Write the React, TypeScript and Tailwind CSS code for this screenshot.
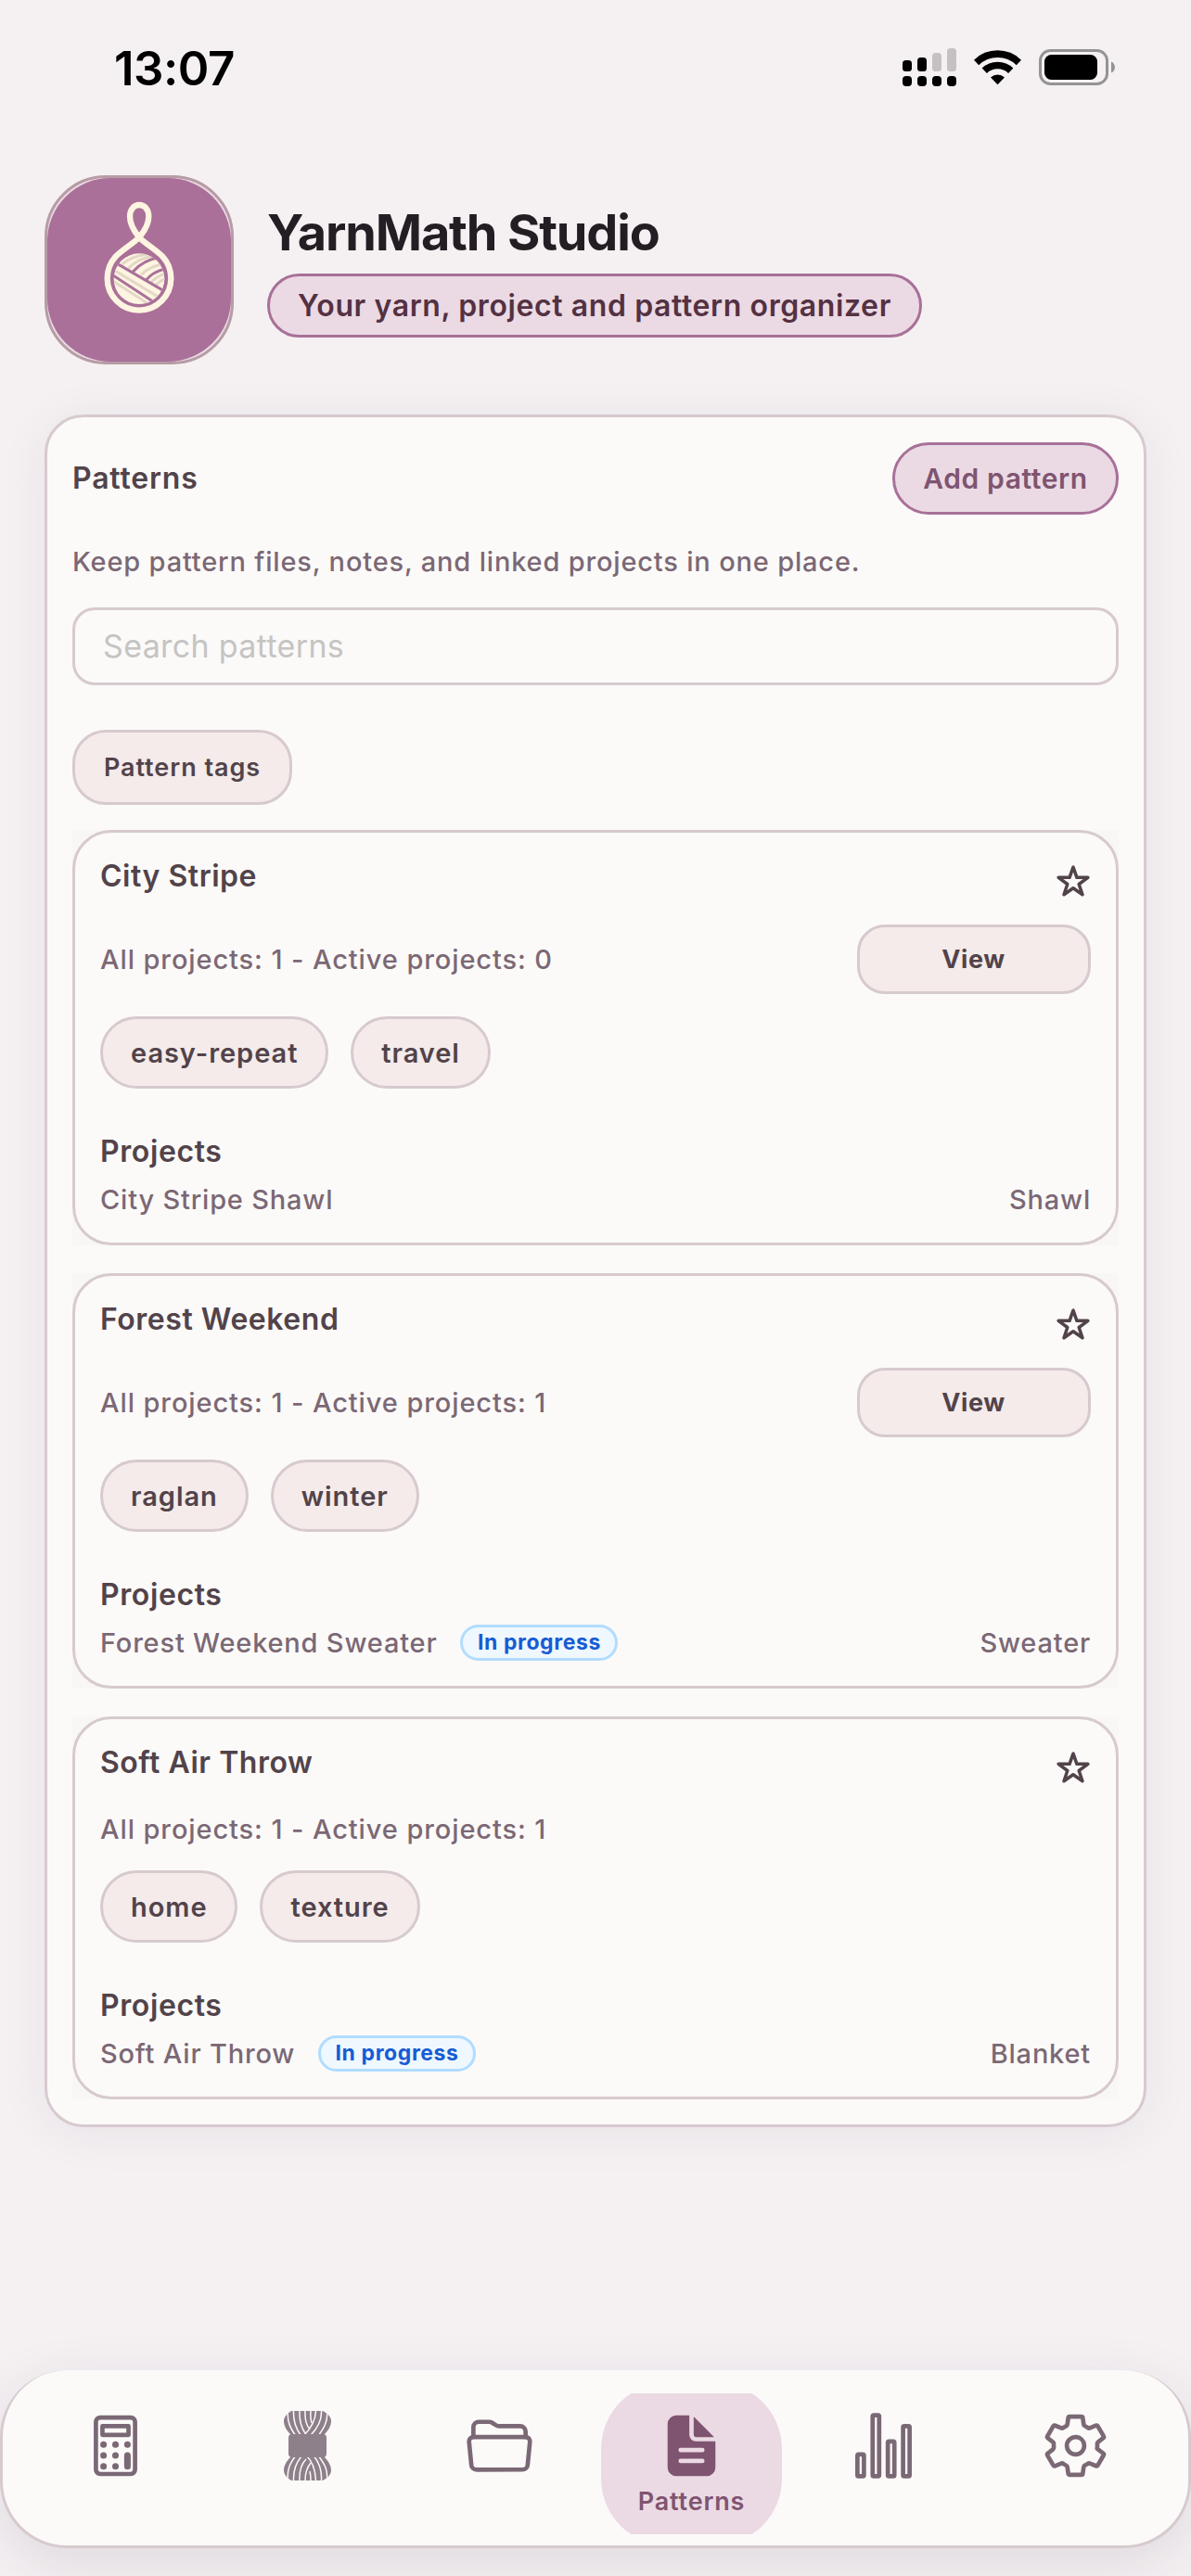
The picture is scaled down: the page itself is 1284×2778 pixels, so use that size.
import React from 'react';
import {
  IoCalculatorOutline,
  IoDocumentText,
  IoFolderOpenOutline,
  IoSettingsOutline,
  IoStatsChartOutline,
} from 'react-icons/io5';

interface Project {
  name: string;
  type: string;
  inProgress: boolean;
}

interface Pattern {
  id: number;
  name: string;
  total: number;
  active: number;
  hasFile: boolean;
  tags: string[];
  projects: Project[];
}

const patterns: Pattern[] = [
  {
    id: 1,
    name: 'City Stripe',
    total: 1,
    active: 0,
    hasFile: true,
    tags: ['easy-repeat', 'travel'],
    projects: [{ name: 'City Stripe Shawl', type: 'Shawl', inProgress: false }],
  },
  {
    id: 2,
    name: 'Forest Weekend',
    total: 1,
    active: 1,
    hasFile: true,
    tags: ['raglan', 'winter'],
    projects: [{ name: 'Forest Weekend Sweater', type: 'Sweater', inProgress: true }],
  },
  {
    id: 3,
    name: 'Soft Air Throw',
    total: 1,
    active: 1,
    hasFile: false,
    tags: ['home', 'texture'],
    projects: [{ name: 'Soft Air Throw', type: 'Blanket', inProgress: true }],
  },
];

// Status bar
const SignalIcon = () => (
  <svg width="58" height="41" viewBox="0 0 58 41">
    <rect x="0" y="13" width="10" height="12" rx="3.5" />
    <rect x="16" y="10" width="10" height="15" rx="3.5" />
    <rect x="32" y="5" width="10" height="20" rx="3.5" fill="#c5c1c3" />
    <rect x="48" y="0" width="10" height="25" rx="3.5" fill="#c5c1c3" />
    <rect x="0" y="30" width="10" height="11" rx="4" />
    <rect x="16" y="30" width="10" height="11" rx="4" />
    <rect x="32" y="30" width="10" height="11" rx="4" />
    <rect x="48" y="30" width="10" height="11" rx="4" />
  </svg>
);

const WifiIcon = () => (
  <svg width="51" height="38" viewBox="0 0 51 38" fill="none" stroke="#000" strokeWidth="7.6">
    <path d="M2.6 13.4A33 33 0 0 1 48.4 13.4" />
    <path d="M11.3 22.2A20.5 20.5 0 0 1 39.7 22.2" />
    <path d="M25.5 37.2L18 29.4A11 11 0 0 1 33 29.4Z" fill="#000" stroke="none" />
  </svg>
);

const BatteryIcon = () => (
  <svg width="83" height="39" viewBox="0 0 83 39">
    <rect x="1.5" y="1.5" width="72" height="36" rx="11" fill="none" stroke="#959394" strokeWidth="3" />
    <rect x="6" y="6" width="57" height="27" rx="7.5" />
    <path d="M78 13.5c5.3 2 5.3 10 0 12z" fill="#959394" />
  </svg>
);

const StatusBar = () => (
  <div className="flex h-[145px] justify-between pl-[123px] pr-[81px]">
    <span className="mt-[44px] h-[60px] text-[51px] font-semibold leading-[60px] tracking-[-0.5px] text-black">13:07</span>
    <div className="mt-[52px] flex h-[41px] items-start">
      <SignalIcon />
      <div className="ml-[19px] mt-[2px]">
        <WifiIcon />
      </div>
      <div className="ml-[19px] mt-[1px]">
        <BatteryIcon />
      </div>
    </div>
  </div>
);

// Yarn ball hanging in a loop of thread
const Logo = () => (
  <svg width="204" height="204" viewBox="0 0 612 612" className="shrink-0">
    <rect x="4.5" y="4.5" width="603" height="603" rx="194" fill="#e9d9e3" stroke="#b79ba5" strokeWidth="9" />
    <rect x="9" y="9" width="594" height="594" rx="204" fill="#aa7099" />
    <g transform="translate(-54 -57)" fill="none">
      <path
        d="M360 258C380 235 391 215 391 190C391 168 378 153 360.5 153C343 153 330 168 330 190C330 215 341 235 360 258C375 275 412 296 436 320C454 340 463 365 463 391A103 103 0 0 1 257 391C257 365 266 340 284 320C308 296 345 275 360 258Z"
        stroke="#fdf5e1"
        strokeWidth="19"
        strokeLinejoin="round"
      />
      <clipPath id="ball">
        <circle cx="360" cy="392" r="82" />
      </clipPath>
      <g clipPath="url(#ball)">
        <rect x="270" y="300" width="180" height="180" fill="#fdf5e1" />
        <g stroke="#e4d7c6" strokeWidth="9">
          <path d="M305 345C328 325 350 317 385 313" />
          <path d="M326 358C348 335 370 325 408 318" />
          <path d="M366 379C386 359 410 347 448 342" />
          <path d="M398 404C412 390 428 380 452 372" />
          <path d="M412 414C424 402 436 394 452 388" />
          <path d="M276 362L425 452" />
          <path d="M270 396L395 476" />
        </g>
        <g stroke="#aa7099" strokeWidth="9">
          <path d="M280 338L445 434" />
          <path d="M268 376L412 470" />
          <path d="M340 369C362 343 388 329 430 322" />
          <path d="M383 395C402 374 420 364 450 359" />
        </g>
      </g>
    </g>
  </svg>
);

const StarIcon = () => (
  <svg width="36" height="36" viewBox="0 0 512 512" className="mr-[1px] mt-[7px] overflow-visible">
    <path
      d="M482 204H312L256 44l-56 160H30l138 102-54 160 142-100 142 100-54-160z"
      fill="none"
      stroke="#52434a"
      strokeWidth="50"
      strokeLinejoin="round"
    />
  </svg>
);

const YarnIcon = () => (
  <svg width="75" height="75" viewBox="0 0 75 75" fill="#8e808a">
    <clipPath id="skein">
      <path d="M20 0H54C60 3 63 7 63 11C63 16 60 21 56 25V50C60 54 63 59 63 64C63 68 60 72 54 75H20C15 72 12 68 12 64C12 59 15 54 19 50V25C15 21 12 16 12 11C12 7 15 3 20 0Z" />
    </clipPath>
    <g clipPath="url(#skein)">
      <rect width="75" height="75" />
      <g fill="none" stroke="#fbfaf8" strokeWidth="1.5">
        <path d="M16.5 0C15 12 20 20 25 27" />
        <path d="M22.5 0C22 12 25 19 30 26" />
        <path d="M29 0C28.5 11 31 18 35 24" />
        <path d="M35 0C34.5 10 37 16 39.5 19" />
        <path d="M41 0C40.5 6 41 10 42 13" />
        <path d="M46.5 0C46 11 41 19 34 26" />
        <path d="M52.5 0C53 12 47 20 41 26" />
        <path d="M58.5 0C60 12 54 20 49 27" />
        <path d="M58.5 75C60 63 55 56 49 48" />
        <path d="M52.5 75C53 63 50 56 44 48" />
        <path d="M46.5 75C46 64 44 55 36 48" />
        <path d="M35 75C35 68 37 61 41 56" />
        <path d="M29 75C28.5 64 31 57 36 52" />
        <path d="M22.5 75C22 63 25 56 31 49" />
        <path d="M16.5 75C15 63 19 56 25 48" />
        <path d="M41 75C41 71 40.5 67 40 65" />
      </g>
    </g>
    <rect x="15" y="25" width="4" height="25" fill="#fbfaf8" />
    <rect x="56" y="25" width="4" height="25" fill="#fbfaf8" />
    <rect x="17" y="25" width="41" height="25" rx="4" />
  </svg>
);

const Header = () => (
  <div className="mt-[44px] flex pl-[48px]">
    <Logo />
    <div className="ml-[36px] flex flex-col items-start pt-[30px]">
      <h1 className="h-[64px] text-[54px] font-bold leading-[64px] tracking-[-1.15px] text-[#231e24]">YarnMath Studio</h1>
      <div className="mt-[12px] flex h-[69px] w-[706px] items-center justify-center rounded-[36px] border-[3px] border-[#a87098] bg-[#ebdae4] text-[32px] font-semibold tracking-[0.6px] text-[#543142]">
        Your yarn, project and pattern organizer
      </div>
    </div>
  </div>
);

const Tag = ({ label }: { label: string }) => (
  <span className="flex h-[78px] items-center rounded-[39px] border-[3px] border-[#d7cacf] bg-[#f4ebea] px-[30px] pt-[1px] text-[29px] font-semibold tracking-[0.95px] text-[#52434a]">
    {label}
  </span>
);

const PatternCard = ({ pattern }: { pattern: Pattern }) => (
  <div className="bg-[#f8f7f6]">
    <div className="flex flex-col rounded-[42px] border-[3px] border-[#d7cacf] bg-[#fbfaf8] p-[27px]">
      {/* Title */}
      <div className="flex h-[48px] items-start justify-between">
        <h3 className="text-[32px] font-semibold leading-[39px] tracking-[0.53px] text-[#52434a]">{pattern.name}</h3>
        <StarIcon />
      </div>

      {/* Counts */}
      <div className="mt-[24px] flex items-center justify-between text-[#7b6875]">
        <span className="text-[29px] font-medium leading-[40px] tracking-[0.9px]">
          All projects: {pattern.total} - Active projects: {pattern.active}
        </span>
        {pattern.hasFile && (
          <button className="h-[75px] w-[252px] rounded-[30px] border-[3px] border-[#d7cacf] bg-[#f4ebea] pr-[1px] pt-[1px] text-[27px] font-bold tracking-[0.6px] text-[#52434a]">
            View
          </button>
        )}
      </div>

      <div className="mt-[24px] flex gap-[24px]">
        {pattern.tags.map((tag) => (
          <Tag key={tag} label={tag} />
        ))}
      </div>

      {/* Linked projects */}
      <h4 className="mt-[48px] text-[32px] font-semibold leading-[39px] tracking-[0.6px] text-[#52434a]">Projects</h4>
      {pattern.projects.map((project) => (
        <div key={project.name} className="mt-[12px] flex h-[40px] items-center text-[29px] font-medium tracking-[0.8px] text-[#7b6875]">
          <span className="pt-[1px]">{project.name}</span>
          {project.inProgress && (
            <span className="ml-[25px] flex h-[39px] w-[170px] items-center justify-center rounded-[20px] border-[3px] border-[#b1dcff] bg-[#eff8ff] text-[23px] font-bold tracking-[0.6px] text-[#175cd3]">
              In progress
            </span>
          )}
          <span className="ml-auto pt-[1px]">{project.type}</span>
        </div>
      ))}
    </div>
  </div>
);

const tabs = [
  { id: 'calculator', icon: <IoCalculatorOutline size={75} /> },
  { id: 'yarn', icon: <YarnIcon /> },
  { id: 'projects', icon: <IoFolderOpenOutline size={75} /> },
  { id: 'patterns', icon: <IoDocumentText size={75} />, label: 'Patterns' },
  { id: 'stats', icon: <IoStatsChartOutline size={75} /> },
  { id: 'settings', icon: <IoSettingsOutline size={75} /> },
];

const TabBar = () => (
  <div className="mb-[30px] mt-auto flex h-[192px] justify-between rounded-[72px] border-x-[3px] border-b-[3px] border-[#d7cacf] bg-[#fbfaf8] px-[24px] pt-[25px] shadow-[0_16px_60px_rgba(50,25,45,0.11)]">
    {tabs.map((tab) =>
      tab.label ? (
        <div key={tab.id} className="h-[152px] w-[195px] overflow-hidden">
          <div className="-mt-[12px] flex h-[176px] flex-col items-center rounded-[72px] bg-[#ebdae4] pt-[31px] text-[#7f5470]">
            {tab.icon}
            <span className="mt-[5px] text-[27px] font-semibold leading-[36px] tracking-[0.8px]">{tab.label}</span>
          </div>
        </div>
      ) : (
        <div key={tab.id} className="flex h-[152px] w-[195px] justify-center pt-[19px] text-[#7b6875]">
          {tab.icon}
        </div>
      ),
    )}
  </div>
);

const App: React.FC = () => {
  return (
    <div className="flex h-[2778px] w-[1284px] flex-col overflow-hidden bg-[#f5f1f3] font-['Inter','Liberation_Sans',sans-serif]">
      <StatusBar />
      <Header />

      {/* Patterns panel */}
      <div className="mx-[48px] mt-[54px] rounded-[42px] border-[3px] border-[#d7cacf] bg-[#fbfaf8] p-[27px] shadow-[0_6px_54px_rgba(50,25,45,0.065)]">
        <div className="flex items-center justify-between">
          <h2 className="text-[32px] font-semibold tracking-[0.8px] text-[#52434a]">Patterns</h2>
          <button className="h-[78px] w-[244px] rounded-[39px] border-[3px] border-[#a87098] bg-[#ebdae4] text-[30px] font-semibold tracking-[0.6px] text-[#7f5470]">
            Add pattern
          </button>
        </div>

        <p className="mt-[24px] text-[29px] font-medium leading-[54px] tracking-[0.82px] text-[#7b6875]">
          Keep pattern files, notes, and linked projects in one place.
        </p>

        <input
          className="mt-[22px] block h-[84px] w-full rounded-[24px] border-[3px] border-[#d7cacf] bg-transparent px-[30px] pb-[1px] text-[34px] tracking-[0.35px] outline-none placeholder:text-[#c5c4c3]"
          placeholder="Search patterns"
        />

        <button className="mt-[48px] block h-[81px] w-[237px] rounded-[36px] border-[3px] border-[#d7cacf] bg-[#f4ebea] pt-[1px] text-[27px] font-semibold tracking-[0.95px] text-[#52434a]">
          Pattern tags
        </button>

        <div className="mt-[27px] flex flex-col gap-[30px]">
          {patterns.map((pattern) => (
            <PatternCard key={pattern.id} pattern={pattern} />
          ))}
        </div>
      </div>

      <TabBar />
    </div>
  );
};

export default App;
